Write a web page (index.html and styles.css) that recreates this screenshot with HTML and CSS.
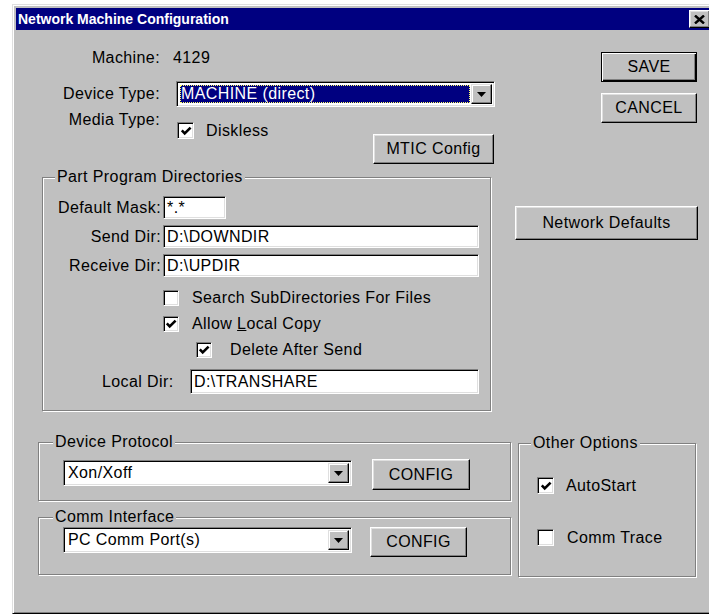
FILE: index.html
```html
<!DOCTYPE html>
<html lang="en">
<head>
<meta charset="utf-8">
<title>Network Machine Configuration</title>
<link rel="stylesheet" href="styles.css">
</head>
<body>
<div class="window">
  <div class="titlebar">
    <span class="title">Network Machine Configuration</span>
    <button class="close" aria-label="Close">
      <svg width="11" height="9" viewBox="0 0 11 9"><path d="M1 0.5 L10 8.5 M10 0.5 L1 8.5" stroke="#000" stroke-width="2.4"/></svg>
    </button>
  </div>

  <div class="client">
    <!-- machine identity + dialog actions -->
    <div class="band band-top">
      <div class="head-form">
        <div class="head-row row-machine">
          <span class="lbl">Machine:</span>
          <span class="machine-id">4129</span>
        </div>
        <div class="head-row row-device">
          <span class="lbl">Device Type:</span>
          <div class="combo combo-device">
            <div class="combo-text selected">MACHINE (direct)</div>
            <span class="drop"><svg width="9" height="5" viewBox="0 0 9 5"><path d="M0 0H9L4.5 5Z"/></svg></span>
          </div>
        </div>
        <div class="head-row row-media">
          <span class="lbl">Media Type:</span>
          <div class="media-body">
            <label class="check check-diskless"><span class="box"><svg width="12" height="12" viewBox="0 0 12 12"><path d="M1.8 5.4 L4.7 8.4 L10.6 2.6" fill="none" stroke="#000" stroke-width="2.6"/></svg></span><span>Diskless</span></label>
            <button class="btn btn-mtic">MTIC Config</button>
          </div>
        </div>
      </div>
      <div class="actions">
        <button class="btn btn-default btn-action">SAVE</button>
        <button class="btn btn-action btn-cancel">CANCEL</button>
      </div>
    </div>

    <!-- directory settings -->
    <div class="band band-mid">
      <fieldset class="group group-dirs">
        <legend>Part Program Directories</legend>
        <div class="dir-grid">
          <span class="lbl">Default Mask:</span>
          <div class="edit edit-mask">*.*</div>
          <span class="lbl">Send Dir:</span>
          <div class="edit">D:\DOWNDIR</div>
          <span class="lbl">Receive Dir:</span>
          <div class="edit">D:\UPDIR</div>
        </div>
        <label class="check opt opt-search"><span class="box"></span><span>Search SubDirectories For Files</span></label>
        <label class="check opt"><span class="box"><svg width="12" height="12" viewBox="0 0 12 12"><path d="M1.8 5.4 L4.7 8.4 L10.6 2.6" fill="none" stroke="#000" stroke-width="2.6"/></svg></span><span>Allow <u>L</u>ocal Copy</span></label>
        <label class="check opt opt-delete"><span class="box"><svg width="12" height="12" viewBox="0 0 12 12"><path d="M1.8 5.4 L4.7 8.4 L10.6 2.6" fill="none" stroke="#000" stroke-width="2.6"/></svg></span><span>Delete After Send</span></label>
        <div class="local-row">
          <span class="lbl-local">Local Dir:</span>
          <div class="edit edit-local">D:\TRANSHARE</div>
        </div>
      </fieldset>
      <button class="btn btn-defaults">Network Defaults</button>
    </div>

    <!-- communication settings -->
    <div class="band band-bottom">
      <div class="comm-col">
        <fieldset class="group group-proto">
          <legend>Device Protocol</legend>
          <div class="comm-row">
            <div class="combo combo-comm">
              <div class="combo-text">Xon/Xoff</div>
              <span class="drop"><svg width="9" height="5" viewBox="0 0 9 5"><path d="M0 0H9L4.5 5Z"/></svg></span>
            </div>
            <button class="btn btn-config">CONFIG</button>
          </div>
        </fieldset>
        <fieldset class="group group-iface">
          <legend>Comm Interface</legend>
          <div class="comm-row">
            <div class="combo combo-comm">
              <div class="combo-text">PC Comm Port(s)</div>
              <span class="drop"><svg width="9" height="5" viewBox="0 0 9 5"><path d="M0 0H9L4.5 5Z"/></svg></span>
            </div>
            <button class="btn btn-config btn-config-iface">CONFIG</button>
          </div>
        </fieldset>
      </div>
      <fieldset class="group group-other">
        <legend>Other Options</legend>
        <label class="check other-opt"><span class="box"><svg width="12" height="12" viewBox="0 0 12 12"><path d="M1.8 5.4 L4.7 8.4 L10.6 2.6" fill="none" stroke="#000" stroke-width="2.6"/></svg></span><span>AutoStart</span></label>
        <label class="check other-opt opt-trace"><span class="box"></span><span>Comm Trace</span></label>
      </fieldset>
    </div>
  </div>
</div>
</body>
</html>
```

FILE: styles.css
```css
html, body {
  margin: 0;
  padding: 0;
  overflow: hidden;
  background: #fff;
}

body {
  width: 709px;
  height: 615px;
  font-family: "Liberation Sans", Arial, sans-serif;
  font-size: 16px;
  letter-spacing: 0.4px;
  line-height: 18px;
  color: #000;
}

/* ---------- window frame ---------- */
.window {
  box-sizing: border-box;
  margin: 4px 0 0 12px;
  width: 704px;
  height: 610px;
  padding: 3px;
  background: #c0c0c0;
  border: 1px solid;
  border-color: #dfdfdf #000 #000 #dfdfdf;
  box-shadow: inset 1px 1px #fff, inset -1px -1px #808080;
  display: flex;
  flex-direction: column;
}

.titlebar {
  height: 22px;
  flex: none;
  background: #000080;
  display: flex;
  align-items: center;
  padding-left: 2px;
}

.title {
  color: #fff;
  font-weight: bold;
  font-size: 14px;
  letter-spacing: 0;
}

.close {
  margin-left: auto;
  margin-right: 2px;
  width: 21px;
  height: 18px;
  padding: 0;
  box-sizing: border-box;
  background: #c0c0c0;
  border: 1px solid;
  border-color: #fff #000 #000 #fff;
  box-shadow: inset -1px -1px #808080, inset 1px 1px #dfdfdf;
  display: flex;
  align-items: center;
  justify-content: center;
}

.client {
  flex: 1;
  display: flex;
  flex-direction: column;
}

.band {
  display: flex;
  align-items: flex-start;
}

/* ---------- common controls ---------- */
button {
  font: inherit;
  letter-spacing: inherit;
  color: #000;
}

.btn {
  box-sizing: border-box;
  padding: 0;
  background: #c0c0c0;
  border: 1px solid;
  border-color: #fff #000 #000 #fff;
  box-shadow: inset -1px -1px #808080, inset 1px 1px #dfdfdf;
  text-align: center;
}

.btn-default {
  border-color: #000;
  box-shadow: inset 1px 1px #fff, inset -1px -1px #000, inset -2px -2px #808080;
}

.edit,
.combo,
.box {
  box-sizing: border-box;
  background: #fff;
  border: 1px solid;
  border-color: #808080 #fff #fff #808080;
  box-shadow: inset 1px 1px #000, inset -1px -1px #dfdfdf;
}

.edit {
  height: 23px;
  padding: 2px 0 0 3px;
  line-height: 18px;
  white-space: nowrap;
}

.combo {
  height: 26px;
  display: flex;
  padding: 2px;
}

.combo-text {
  flex: 1;
  line-height: 20px;
  padding-left: 2px;
  white-space: nowrap;
}

.combo-text.selected {
  margin: 1px;
  line-height: 18px;
  padding-left: 1px;
  background: #000080;
  color: #fff;
  outline: 1px dotted #ffff66;
  outline-offset: -1px;
}

.drop {
  width: 21px;
  box-sizing: border-box;
  background: #c0c0c0;
  border: 1px solid;
  border-color: #dfdfdf #000 #000 #dfdfdf;
  box-shadow: inset -1px -1px #808080, inset 1px 1px #fff;
  display: flex;
  align-items: center;
  justify-content: center;
}

.check {
  display: flex;
  align-items: center;
}

.box {
  width: 16px;
  height: 16px;
  flex: none;
  display: flex;
  align-items: center;
  justify-content: center;
}

/* etched group boxes */
.group {
  margin: 0;
  padding: 0;
  min-width: 0;
  box-sizing: border-box;
  border: 1px solid #808080;
  box-shadow: inset 1px 1px #fff, 1px 1px #fff;
}

.group legend {
  padding: 0 2px;
  background: #c0c0c0;
  line-height: 18px;
}

/* ---------- top band ---------- */
.head-form {
  width: 479px;
}

.head-row {
  display: flex;
}

.lbl {
  text-align: right;
}

.head-row .lbl {
  width: 144px;
  padding-right: 2px;
  flex: none;
}

.row-machine {
  margin-top: 19px;
}

.machine-id {
  margin-left: 11px;
}

.row-device {
  margin-top: 14px;
  align-items: center;
}

.combo-device {
  margin-left: 14px;
  width: 319px;
}

.row-media {
  margin-top: 4px;
}

.media-body {
  flex: 1;
  display: flex;
  align-items: flex-start;
}

.check-diskless {
  margin-left: 15px;
  margin-top: 11px;
  height: 17px;
}

.check-diskless .box {
  width: 17px;
  height: 17px;
  margin-right: 12px;
}

.btn-mtic {
  margin-left: auto;
  margin-right: 1px;
  margin-top: 23px;
  width: 121px;
  height: 30px;
}

.actions {
  margin-left: 106px;
  margin-top: 22px;
  display: flex;
  flex-direction: column;
  gap: 11px;
}

.btn-action {
  width: 96px;
  height: 30px;
}

/* ---------- directories band ---------- */
.band-mid {
  margin-top: 4px;
}

.group-dirs {
  margin-left: 26px;
  width: 449px;
  padding: 10px 0 16px 0;
}

.group-dirs legend {
  margin-left: 12px;
}

.dir-grid {
  display: grid;
  grid-template-columns: 118px 316px;
  grid-auto-rows: 23px;
  column-gap: 2px;
  row-gap: 6px;
  align-items: center;
}

.edit-mask {
  width: 63px;
}

.opt {
  height: 26px;
  padding-left: 120px;
}

.opt-search {
  margin-top: 8px;
}

.opt .box {
  margin-right: 13px;
}

.opt-delete {
  padding-left: 153px;
}

.opt-delete .box {
  margin-right: 18px;
}

.local-row {
  margin-top: 6px;
  padding-left: 59px;
  display: flex;
  align-items: center;
}

.lbl-local {
  width: 88px;
  flex: none;
}

.edit-local {
  width: 289px;
  height: 25px;
  padding-top: 3px;
}

.btn-defaults {
  margin-left: 24px;
  margin-top: 38px;
  width: 183px;
  height: 34px;
}

/* ---------- communication band ---------- */
.band-bottom {
  margin-top: 22px;
}

.comm-col {
  margin-left: 22px;
  width: 473px;
  display: flex;
  flex-direction: column;
}

.group-proto {
  padding: 9px 0 10px 24px;
}

.group-iface {
  margin-top: 7px;
  padding: 1px 0 17px 24px;
}

.group-proto legend,
.group-iface legend {
  margin-left: -10px;
}

.comm-row {
  display: flex;
  align-items: flex-start;
}

.combo-comm {
  width: 289px;
}

.btn-config {
  margin-left: 20px;
  margin-top: -1px;
  width: 98px;
  height: 31px;
}

.btn-config-iface {
  margin-left: 18px;
  margin-top: 0;
  width: 97px;
  height: 30px;
}

.group-other {
  margin-left: 7px;
  margin-top: 1px;
  width: 178px;
  padding: 25px 0 30px 18px;
}

.group-other legend {
  margin-left: -6px;
}

.other-opt {
  height: 17px;
}

.other-opt .box {
  width: 17px;
  height: 17px;
  margin-right: 12px;
}

.opt-trace {
  margin-top: 35px;
}

.opt-trace span:last-child {
  margin-left: 1px;
}
```
